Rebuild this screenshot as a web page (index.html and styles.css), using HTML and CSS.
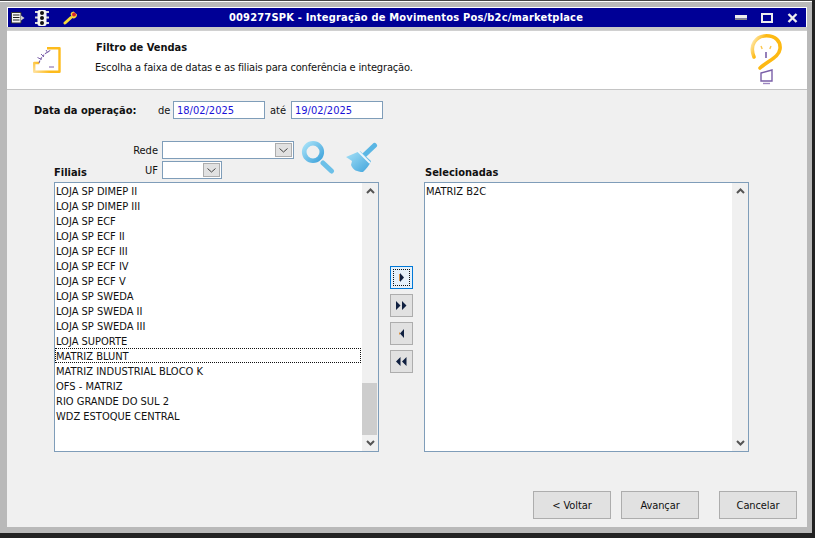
FILE: index.html
```html
<!DOCTYPE html>
<html lang="pt-BR">
<head>
<meta charset="utf-8">
<title>Integração de Movimentos</title>
<link rel="stylesheet" href="styles.css">
</head>
<body>
<div class="window">
  <div class="titlebar">
    <div class="tb-left">
      <svg class="ti ti-menu" width="14" height="12" viewBox="0 0 14 12"><path d="M.5.500h9.500v10.500H.5z" fill="#f4f4f4" stroke="#333"/><path d="M2 3h6.500M2 5.500h6.500M2 8h6.500" stroke="#222"/><path d="M10 3.500l3.500 2.500L10 8.500z" fill="#cfcfcf"/></svg>
      <svg class="ti ti-light" width="14" height="16" viewBox="0 0 14 16"><path d="M0 2h14M0 7.500h14M0 13h14" stroke="#d8d8d8" stroke-width="2"/><rect x="2.500" y="0" width="9" height="16" rx="2" fill="#f4f4f4"/><circle cx="7" cy="3" r="2" fill="#111"/><circle cx="7" cy="8" r="2" fill="#111"/><circle cx="7" cy="13" r="2" fill="#111"/></svg>
      <svg class="ti ti-wrench" width="15" height="14" viewBox="0 0 15 14"><path d="M2 12L8 6.500" stroke="#f5d93a" stroke-width="3" stroke-linecap="round"/><path d="M7.500 3a3.500 3.500 0 0 1 3-2.500l3.500 3a3.500 3.500 0 0 1-5 3.500z" fill="#f5d93a"/><circle cx="11" cy="3.500" r="2" fill="#d8262c"/></svg>
    </div>
    <div class="title">009277SPK - Integração de Movimentos Pos/b2c/marketplace</div>
    <div class="tb-right">
      <svg width="12" height="5" viewBox="0 0 12 5"><path d="M0 0h12v3.500H0z" fill="#eee"/><path d="M0 3.500h12V5H0z" fill="#888"/></svg>
      <svg width="12" height="10" viewBox="0 0 12 10"><path d="M1 1h10v8H1z" fill="none" stroke="#eee" stroke-width="2"/><path d="M2 7h8v1H2z" fill="#000096"/></svg>
      <svg width="11" height="10" viewBox="0 0 11 10"><path d="M1.500 1l8 8M9.500 1l-8 8" stroke="#eee" stroke-width="2.400"/></svg>
    </div>
  </div>
  <div class="gap"></div>
  <header class="head">
    <svg class="head-icon" width="28" height="26" viewBox="0 0 28 26"><defs><linearGradient id="o" x1="0" y1="1" x2=".6" y2=".4"><stop offset="0" stop-color="#ffe09a"/><stop offset=".5" stop-color="#fdbb1c"/></linearGradient></defs><path d="M14 1.200h12.500v23.500H1.200V16h5" fill="none" stroke="url(#o)" stroke-width="2.400" stroke-linejoin="round"/><path d="M6 16C8 10 12 6 18 3" fill="none" stroke="#7a5fa8" stroke-width="1.100" stroke-dasharray="2.500 1.200"/><path d="M4.500 10.500l4 2M8 7l3 3M13 3l2 3M16 20h5" fill="none" stroke="#7a5fa8"/></svg>
    <div class="head-text">
      <h1>Filtro de Vendas</h1>
      <p>Escolha a faixa de datas e as filiais para conferência e integração.</p>
    </div>
    <svg class="bulb" width="34" height="56" viewBox="0 0 34 56"><defs><linearGradient id="g" x1="0" y1="0" x2="1" y2="0.600"><stop offset="0" stop-color="#fff3d0"/><stop offset=".35" stop-color="#fdb913"/></linearGradient></defs><path d="M5 26C0 14 7 4.800 17.500 4.800 26 4.800 32 10 31 18 30 26 20 29 11 37" fill="none" stroke="url(#g)" stroke-width="3.600" stroke-linecap="round"/><path d="M17 21v6" stroke="#7a5fa8" stroke-width="1.600"/><path d="M12 15l1.200 3M22 15l-1.200 3" stroke="#fcc64b" stroke-width="1.400"/><path d="M12 42l11-3v11H12z" fill="#fff" stroke="#7a5fa8" stroke-width="1.400"/><path d="M14 52.500h7" stroke="#9c86c0" stroke-width="1.400"/></svg>
  </header>
  <main class="body">
    <div class="date-row">
      <span class="strong date-label">Data da operação:</span>
      <span class="de">de</span>
      <span class="field">18/02/2025</span>
      <span class="ate">até</span>
      <span class="field">19/02/2025</span>
    </div>
    <div class="filters">
      <div class="filter-col">
        <div class="filter-row"><span class="flabel">Rede</span><span class="select s-rede"><i class="sbtn"><svg width="9" height="5" viewBox="0 0 9 5"><path d="M.5.500l4 3.500 4-3.500" fill="none" stroke="#444"/></svg></i></span></div>
        <div class="filter-row"><span class="flabel">UF</span><span class="select s-uf"><i class="sbtn"><svg width="9" height="5" viewBox="0 0 9 5"><path d="M.5.500l4 3.500 4-3.500" fill="none" stroke="#444"/></svg></i></span></div>
      </div>
      <svg class="tool" width="34" height="35" viewBox="0 0 34 35"><defs><linearGradient id="b" x1="0" y1="0" x2="1" y2="1"><stop offset="0" stop-color="#a8e2f8"/><stop offset="1" stop-color="#3fa3db"/></linearGradient></defs><circle cx="12" cy="12" r="8.800" fill="none" stroke="url(#b)" stroke-width="4.600"/><path d="M22 23l8.500 8" stroke="#6cc0e8" stroke-width="5" stroke-linecap="round"/></svg>
      <svg class="tool tool2" width="34" height="35" viewBox="0 0 34 35"><path d="M21 14.500L30.500 5.500" stroke="#5ab6e4" stroke-width="5" stroke-linecap="round"/><path d="M2 17l14-6 11 10c-2 5-5 8-8 11-6 0-10-2-12-7l1-4z" fill="url(#b)"/><path d="M14 11l12 12" stroke="#eef6fb" stroke-width="1.800"/></svg>
    </div>
    <div class="transfer">
      <section class="pane">
        <div class="strong pane-label">Filiais</div>
        <div class="list">
          <ul class="rows">
            <li>LOJA SP DIMEP II</li>
            <li>LOJA SP DIMEP III</li>
            <li>LOJA SP ECF</li>
            <li>LOJA SP ECF II</li>
            <li>LOJA SP ECF III</li>
            <li>LOJA SP ECF IV</li>
            <li>LOJA SP ECF V</li>
            <li>LOJA SP SWEDA</li>
            <li>LOJA SP SWEDA II</li>
            <li>LOJA SP SWEDA III</li>
            <li>LOJA SUPORTE</li>
            <li class="focus">MATRIZ BLUNT</li>
            <li>MATRIZ INDUSTRIAL BLOCO K</li>
            <li>OFS - MATRIZ</li>
            <li>RIO GRANDE DO SUL 2</li>
            <li>WDZ ESTOQUE CENTRAL</li>
          </ul>
          <div class="scroll">
            <svg class="arrow" width="9" height="6" viewBox="0 0 9 6"><path d="M1 5l3.500-3.500L8 5" fill="none" stroke="#555" stroke-width="2"/></svg>
            <div class="track"><div class="thumb"></div></div>
            <svg class="arrow" width="9" height="6" viewBox="0 0 9 6"><path d="M1 1l3.500 3.500L8 1" fill="none" stroke="#555" stroke-width="2"/></svg>
          </div>
        </div>
      </section>
      <div class="movers">
        <button class="mv mv-active"><span class="mv-focus"><svg width="6" height="9" viewBox="0 0 6 9"><path d="M1 0l4 4.500L1 9z" fill="#102040"/><path d="M.5 1v7" stroke="#d99040"/></svg></span></button>
        <button class="mv"><svg width="11" height="9" viewBox="0 0 11 9"><path d="M0 0l4.500 4.500L0 9zM6 0l4.500 4.500L6 9z" fill="#102040"/></svg></button>
        <button class="mv"><svg width="6" height="9" viewBox="0 0 6 9"><path d="M5 0L1 4.500 5 9z" fill="#102040"/><path d="M.5 3.500v2" stroke="#d99040"/></svg></button>
        <button class="mv"><svg width="11" height="9" viewBox="0 0 11 9"><path d="M4.500 0L0 4.500 4.500 9zM10.500 0L6 4.500 10.500 9z" fill="#102040"/></svg></button>
      </div>
      <section class="pane">
        <div class="strong pane-label pl-right">Selecionadas</div>
        <div class="list">
          <ul class="rows">
            <li>MATRIZ B2C</li>
          </ul>
          <div class="scroll">
            <svg class="arrow" width="9" height="6" viewBox="0 0 9 6"><path d="M1 5l3.500-3.500L8 5" fill="none" stroke="#555" stroke-width="2"/></svg>
            <div class="track"></div>
            <svg class="arrow" width="9" height="6" viewBox="0 0 9 6"><path d="M1 1l3.500 3.500L8 1" fill="none" stroke="#555" stroke-width="2"/></svg>
          </div>
        </div>
      </section>
    </div>
    <footer class="actions">
      <button class="btn">&lt; Voltar</button>
      <button class="btn">Avançar</button>
      <button class="btn btn-cancel">Cancelar</button>
    </footer>
  </main>
</div>
</body>
</html>
```
FILE: styles.css
```css
* { box-sizing: border-box; }
html, body { margin: 0; padding: 0; }
body { width: 815px; height: 538px; overflow: hidden; background: #222; font: 11px "DejaVu Sans Condensed", "DejaVu Sans", sans-serif; color: #111; }
.window {
  width: 812px; height: 533px;
  background: #b9b9b9;
  border-top: 1px solid #444;
  padding: 6px 5px 6px 7px;
  display: flex; flex-direction: column;
  box-shadow: inset 0 1px 0 #fff;
}
.titlebar {
  flex: none; height: 20px; background: #000096;
  border-top: 1px solid #fff; border-left: 1px solid #fff; border-right: 1px solid #fff;
  display: flex; align-items: center;
  color: #fff;
}
.tb-left { display: flex; align-items: center; padding-left: 3px; width: 190px; flex: none; }
.ti-light { margin-left: 10px; }
.ti-wrench { margin-left: 14px; }
.title { flex: 1; text-align: center; font-weight: bold; font-size: 11px; letter-spacing: .2px; white-space: nowrap; padding-right: 2px; }
.tb-right { width: 190px; flex: none; display: flex; justify-content: flex-end; align-items: center; gap: 14px; padding-right: 8px; }
.gap { flex: none; height: 3px; background: #c8c8c8; }
.head {
  flex: none; height: 60px; background: #fff; border-top: 1px solid #d0d0d0; border-bottom: 1px solid #c4c4c4;
  display: flex; align-items: flex-start;
}
.head-icon { margin: 16px 0 0 26px; flex: none; }
.head-text { margin-left: 34px; flex: 1; }
.head-text h1 { margin: 10px 0 0 1px; font-size: 11px; font-weight: bold; line-height: 13px; }
.head-text p { margin: 7px 0 0; font-size: 11px; line-height: 13px; letter-spacing: -.15px; }
.bulb { flex: none; margin: 0 24px 0 0; }
.body { flex: 1; background: #f0f0f0; padding: 11px 0 0 27px; display: flex; flex-direction: column; min-height: 0; }
.strong { font-weight: bold; }
.date-row { display: flex; align-items: center; height: 18px; }
.date-label { width: 124px; }
.de { width: 15px; }
.ate { width: 26px; text-align: center; }
.field { width: 92px; height: 18px; background: #fff; border: 1px solid #7f9db9; color: #1a12d8; padding: 1px 0 0 3px; line-height: 16px; }
.filters { display: flex; align-items: flex-start; margin-top: 22px; height: 25px; }
.filter-col { display: flex; flex-direction: column; gap: 2px; width: 267px; flex: none; }
.filter-row { display: flex; align-items: center; height: 18px; }
.flabel { flex: none; width: 97px; text-align: right; margin-left: 27px; margin-right: 4px; }
.select { display: flex; justify-content: flex-end; align-items: center; background: #fff; border: 1px solid #7f9db9; height: 18px; padding-right: 1px; }
.s-rede { width: 132px; }
.s-uf { width: 60px; }
.sbtn { width: 17px; height: 14px; background: #e1e1e1; border: 1px solid #adadad; display: flex; align-items: center; justify-content: center; }
.tool { flex: none; margin: -1px 0 0 0; }
.tool2 { margin-left: 9px; }
.transfer { display: flex; align-items: flex-start; margin-left: 20px; }
.pane { width: 325px; flex: none; display: flex; flex-direction: column; }
.pane-label { height: 16px; line-height: 13px; align-self: flex-start; }
.pl-right { margin-left: 1px; }
.list { width: 325px; height: 270px; background: #fff; border: 1px solid #7f9db9; display: flex; }
.rows { list-style: none; margin: 0; padding: 0 1px 0 0; flex: 1; min-width: 0; }
.rows li { height: 15px; line-height: 15px; padding: 1px 0 0 1px; white-space: nowrap; }
.rows li.focus { outline: 1px dotted #111; outline-offset: -1px; }
.scroll { width: 16px; flex: none; background: #f0f0f0; display: flex; flex-direction: column; align-items: center; }
.arrow { flex: none; margin: 5px 0; }
.track { flex: 1; width: 100%; display: flex; flex-direction: column; justify-content: flex-end; }
.thumb { height: 52px; width: 15px; background: #cdcdcd; align-self: flex-start; }
.movers { width: 45px; flex: none; display: flex; flex-direction: column; align-items: center; gap: 5px; padding-top: 100px; }
.mv { width: 23px; height: 23px; padding: 0; background: #e1e1e1; border: 1px solid #adadad; display: flex; align-items: center; justify-content: center; }
.mv-active { border: 1px solid #0078d7; background: #e5f1fb; }
.mv-focus { width: 17px; height: 17px; border: 1px dotted #111; display: flex; align-items: center; justify-content: center; }
.actions { display: flex; justify-content: flex-end; gap: 10px; margin-top: 39px; padding-right: 10px; }
.btn { width: 78px; height: 28px; background: #e1e1e1; border: 1px solid #adadad; font: inherit; letter-spacing: -.1px; color: #111; padding: 0; }
.btn-cancel { margin-left: 10px; }
```
